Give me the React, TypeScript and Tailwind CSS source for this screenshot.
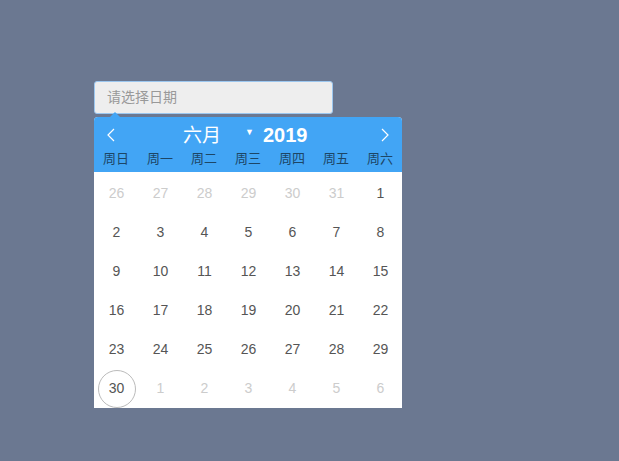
import React from 'react';

const weekdays = ['周日', '周一', '周二', '周三', '周四', '周五', '周六'];

type Day = { n: number; muted?: boolean; today?: boolean };

const buildDays = (): Day[] => {
  const days: Day[] = [];
  [26, 27, 28, 29, 30, 31].forEach(n => days.push({ n, muted: true }));
  for (let i = 1; i <= 30; i++) days.push({ n: i, today: i === 30 });
  [1, 2, 3, 4, 5, 6].forEach(n => days.push({ n, muted: true }));
  return days;
};

const App: React.FC = () => {
  const days = buildDays();

  return (
    <div
      className="w-[619px] h-[461px] bg-[#6b7891] pt-[81px] pl-[94px]"
      style={{ fontFamily: '"Liberation Sans", "Noto Sans CJK SC", sans-serif' }}
    >
      <div className="w-[239px] h-[33px] bg-[#eeeeee] border border-[#9cc7ef] rounded-[3px] flex items-center px-[12px]">
        <span className="text-[14px] text-[#999999]">请选择日期</span>
      </div>

      <div className="relative mt-[3px] w-[308px] bg-white rounded-t-[4px]">
        <div className="absolute -top-[5px] left-[16px] w-0 h-0 border-l-[5px] border-r-[5px] border-b-[5px] border-l-transparent border-r-transparent border-b-[#42a5f5]" />
        <div className="h-[55px] bg-[#42a5f5] rounded-t-[4px] flex flex-col">
          <div className="h-[34px] flex items-center text-white relative">
            <svg className="absolute left-[12px] top-[11px]" width="10" height="14" viewBox="0 0 10 14" fill="none">
              <path d="M8 1 L2 7 L8 13" stroke="white" strokeWidth="1.2" />
            </svg>
            <span className="absolute left-[89px] top-[7px] text-[19px] leading-[24px]">六月</span>
            <span className="absolute left-[151px] top-[10px] text-[9px] leading-[10px]">▼</span>
            <span className="absolute left-[169px] top-[6px] text-[20px] leading-[24px] font-bold">2019</span>
            <svg className="absolute left-[286px] top-[11px]" width="10" height="14" viewBox="0 0 10 14" fill="none">
              <path d="M2 1 L8 7 L2 13" stroke="white" strokeWidth="1.2" />
            </svg>
          </div>
          <div className="grid grid-cols-7">
            {weekdays.map(w => (
              <div key={w} className="text-center text-[13px] leading-[16px] text-[#1d4666]">{w}</div>
            ))}
          </div>
        </div>
        <div className="grid grid-cols-7 pt-[2px]">
          {days.map((d, i) => (
            <div key={i} className="h-[39px] flex items-center justify-center pl-[1px]">
              <span
                className={
                  'text-[14px] ' +
                  (d.muted ? 'text-[#cccccc]' : 'text-[#555555]') +
                  (d.today && !d.muted
                    ? ' w-[38px] h-[38px] rounded-full border border-[#bbbbbb] flex items-center justify-center'
                    : '')
                }
              >
                {d.n}
              </span>
            </div>
          ))}
        </div>
      </div>
    </div>
  );
};

export default App;
